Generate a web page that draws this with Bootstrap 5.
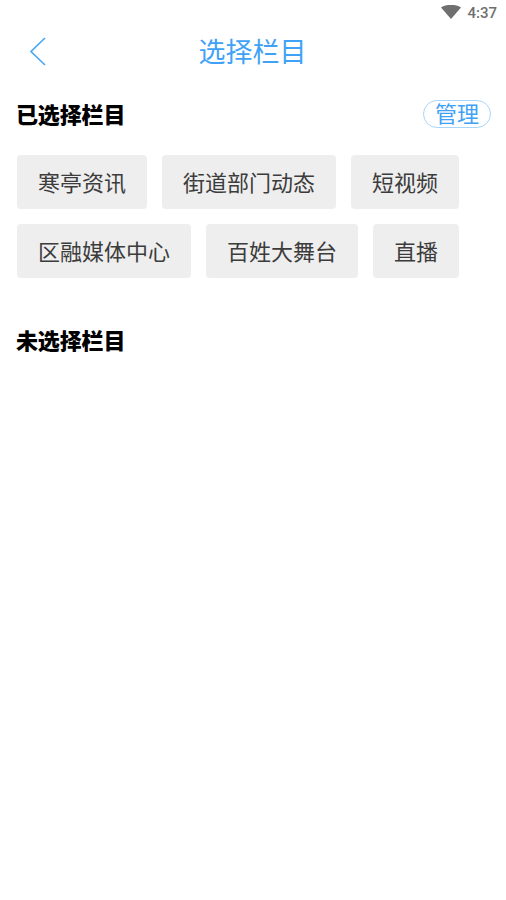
<!DOCTYPE html>
<html lang="zh">
<head>
<meta charset="utf-8">
<title>选择栏目</title>
<link rel="stylesheet" href="https://cdn.jsdelivr.net/npm/bootstrap@5.3.0/dist/css/bootstrap.min.css">
<style>
html, body { height: 100%; }
body { background: #fff; font-family: "Noto Sans CJK SC", "Liberation Sans", sans-serif; overflow: hidden; }
.status-strip { height: 26px; padding-right: 9px; gap: 6px; color: #6f6f6f; font-family: "Roboto", sans-serif; font-size: 15px; font-weight: 500; line-height: 26px; }
.status-strip svg { display: block; margin-top: -2px; }
.head-bar { height: 52px; }
.head-back { left: 29px; top: 10px; }
.head-title { color: #3fa2f6; font-size: 27px; line-height: 50px; padding-right: 1px; }
.sec-row { padding: 0 15px 0 16px; height: 32px; margin-top: 19px; }
.sec-title { font-size: 22px; line-height: 31px; font-weight: 900; color: #000; letter-spacing: -.15px; }
.manage-btn { width: 68px; height: 28px; margin-top: 1px; border: 1px solid #a9d6fb; border-radius: 14px; color: #3fa2f6; font-size: 22px; line-height: 23px; text-align: center; }
.chip-wrap { padding: 26px 17px 0; gap: 15px; }
.chip-item { height: 54px; background: #eeeeee; border-radius: 4px; color: #3c3c3c; font-size: 22px; line-height: 52px; padding: 0 21px; white-space: nowrap; }
.sec-two { margin-top: 46px; }
</style>
</head>
<body>
<div class="status-strip d-flex justify-content-end align-items-center">
<svg width="20" height="14" viewBox="0 0 20 14"><path d="M0 2.5C5.5-1 14.500-1 20 2.500L10 14Z" fill="#6f6f6f"/></svg>
<span>4:37</span>
</div>
<div class="head-bar position-relative text-center">
<svg class="head-back position-absolute" width="18" height="30" viewBox="0 0 18 30"><path d="M16 2 2 15.500 16 29" fill="none" stroke="#4aa8f7" stroke-width="1.700"/></svg>
<div class="head-title">选择栏目</div>
</div>
<div class="sec-row d-flex justify-content-between align-items-center">
<div class="sec-title">已选择栏目</div>
<div class="manage-btn">管理</div>
</div>
<div class="chip-wrap d-flex flex-wrap">
<div class="chip-item">寒亭资讯</div>
<div class="chip-item">街道部门动态</div>
<div class="chip-item">短视频</div>
<div class="chip-item">区融媒体中心</div>
<div class="chip-item">百姓大舞台</div>
<div class="chip-item">直播</div>
</div>
<div class="sec-row sec-two d-flex">
<div class="sec-title">未选择栏目</div>
</div>
<script src="https://cdn.jsdelivr.net/npm/bootstrap@5.3.0/dist/js/bootstrap.bundle.min.js"></script>
</body>
</html>
